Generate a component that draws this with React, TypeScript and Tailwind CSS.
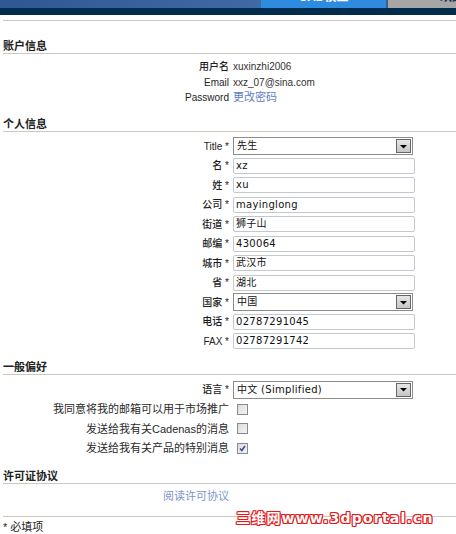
import React from "react"

const ff = "font-['Liberation_Sans','Noto_Sans_CJK_SC',sans-serif]"

function Heading({ children, className = "" }: { children: React.ReactNode; className?: string }) {
  return (
    <div className={`ml-[3px] border-b border-[#ccc8c0] pb-[1px] text-[11px] leading-[12px] font-bold text-[#222] ${className}`}>
      {children}
    </div>
  )
}

function Select({ value }: { value: string }) {
  return (
    <div className="w-[180px] h-[18px] border border-[#8c8c8c] bg-white flex items-center p-[1px]">
      <span className="flex-1 pl-[2px] font-['DejaVu_Sans','Noto_Sans_CJK_SC',sans-serif] text-[10px] tracking-[0.3px] leading-[14px] text-[#111] whitespace-nowrap">{value}</span>
      <span className="w-[15px] h-[14px] border border-[#666] bg-gradient-to-b from-[#e6e6e6] to-[#c6c6c6] flex items-center justify-center">
        <svg width="7" height="5" viewBox="0 0 7 5">
          <path d="M0 1h7L3.5 4.5z" fill="#000" />
        </svg>
      </span>
    </div>
  )
}

function Input({ value }: { value: string }) {
  return (
    <div className="w-[182px] h-[16px] border border-[#c3c7cf] rounded-[2px] bg-white px-[2px] font-['DejaVu_Sans','Noto_Sans_CJK_SC',sans-serif] text-[10px] tracking-[0.3px] leading-[14px] text-[#111] whitespace-nowrap">
      {value}
    </div>
  )
}

function Checkbox({ checked }: { checked?: boolean }) {
  return (
    <span className="ml-[4px] w-[11px] h-[11px] border border-[#8a8a8a] bg-gradient-to-br from-[#dcdcdc] to-[#f4f4f4] flex items-center justify-center">
      {checked && (
        <svg width="7" height="7" viewBox="0 0 7 7">
          <path d="M1 3.5l1.8 2L6 1" fill="none" stroke="#3d4c96" strokeWidth="1.6" />
        </svg>
      )}
    </span>
  )
}

const personal: { label: string; value: string; select?: boolean }[] = [
  { label: "Title", value: "先生", select: true },
  { label: "名", value: "xz" },
  { label: "姓", value: "xu" },
  { label: "公司", value: "mayinglong" },
  { label: "街道", value: "狮子山" },
  { label: "邮编", value: "430064" },
  { label: "城市", value: "武汉市" },
  { label: "省", value: "湖北" },
  { label: "国家", value: "中国", select: true },
  { label: "电话", value: "02787291045" },
  { label: "FAX", value: "02787291742" },
]

const prefs = [
  { label: "我同意将我的邮箱可以用于市场推广", checked: false },
  { label: "发送给我有关Cadenas的消息", checked: false },
  { label: "发送给我有关产品的特别消息", checked: true },
]

export default function App() {
  return (
    <div className={`relative w-[456px] h-[534px] overflow-hidden bg-white ${ff}`}>
      {/* top nav */}
      <div className="h-[8px] flex bg-gradient-to-r from-[#2d5894] to-[#4a79b3]">
        <div className="flex-1" />
        <div className="w-[125px] bg-[#2e8be0] overflow-hidden text-center text-white text-[12px] leading-[12px] font-bold">
          <div className="-mt-[9px]">CAD模型</div>
        </div>
        <div className="w-[2px] bg-[#3b5f88]" />
        <div className="w-[68px] bg-[#a6a6a6] overflow-hidden text-[#1b3354] text-[12px] leading-[12px] font-bold">
          <div className="-mt-[9px] pl-[52px] whitespace-nowrap">欢迎</div>
        </div>
      </div>
      <div className="h-[7px] bg-[#022c4e]" />
      <div className="mt-[5px] ml-[3px] border-t border-[#ccc8c0]" />

      {/* account */}
      <Heading className="mt-[19px]">账户信息</Heading>
      <div className="mt-[5px] grid grid-cols-[229px_1fr] gap-x-[4px] text-[10px] leading-[15.5px]">
        <div className="text-right font-medium text-[#1e1e1e]">用户名</div>
        <div className="text-[#333]">xuxinzhi2006</div>
        <div className="text-right font-medium text-[#1e1e1e]">Email</div>
        <div className="text-[#333]">xxz_07@sina.com</div>
        <div className="text-right font-medium text-[#1e1e1e]">Password</div>
        <div className="text-[11px] text-[#5f80c2]">更改密码</div>
      </div>

      {/* personal */}
      <Heading className="mt-[12px]">个人信息</Heading>
      <div className="mt-[5px] flex flex-col">
        {personal.map((r) => (
          <div key={r.label} className="h-[19.5px] grid grid-cols-[229px_1fr] gap-x-[4px] items-center">
            <div className="text-right text-[10px] font-medium text-[#1e1e1e]">{r.label} *</div>
            {r.select ? <Select value={r.value} /> : <Input value={r.value} />}
          </div>
        ))}
      </div>

      {/* preferences */}
      <Heading className="mt-[10px]">一般偏好</Heading>
      <div className="mt-[5px] flex flex-col">
        <div className="h-[19.5px] grid grid-cols-[229px_1fr] gap-x-[4px] items-center">
          <div className="text-right text-[10px] font-medium text-[#1e1e1e]">语言 *</div>
          <Select value="中文 (Simplified)" />
        </div>
        {prefs.map((p) => (
          <div key={p.label} className="h-[19.5px] grid grid-cols-[229px_1fr] gap-x-[4px] items-center">
            <div className="text-right text-[11px] text-[#2a2a2a] whitespace-nowrap">{p.label}</div>
            <Checkbox checked={p.checked} />
          </div>
        ))}
      </div>

      {/* licence */}
      <Heading className="mt-[12px]">许可证协议</Heading>
      <div className="mt-[5px] pl-[163px] text-[11px] leading-[14px] text-[#7b96c9]">阅读许可协议</div>
      <div className="mt-[13px] ml-[3px] border-t border-[#ccc8c0]" />
      <div className="mt-[4px] ml-[3px] text-[11px] leading-[12px] text-[#222]">* 必填项</div>

      {/* watermark */}
      <div className="absolute left-[236px] top-[510px] font-['DejaVu_Sans','Noto_Sans_CJK_SC',sans-serif] text-[14px] leading-[16px] font-bold text-white tracking-[1.2px] whitespace-nowrap [text-shadow:1px_0_#e31b1b,-1px_0_#e31b1b,0_1px_#e31b1b,0_-1px_#e31b1b,1px_1px_#e31b1b,-1px_-1px_#e31b1b,1px_-1px_#e31b1b,-1px_1px_#e31b1b]">
        三维网www.3dportal.cn
      </div>
    </div>
  )
}
